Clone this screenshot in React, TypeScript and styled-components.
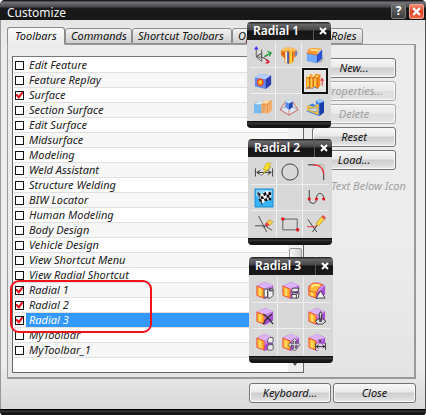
import React from 'react';
import styled, { createGlobalStyle } from 'styled-components';

const Global = createGlobalStyle`
  * { box-sizing: border-box; }
  body { margin: 0; background: #fff; font-family: "Noto Sans", "Open Sans", sans-serif; font-size: 11px; color: #111; }
  button, input { font: inherit; color: inherit; margin: 0; padding: 0; }
`;

const Dialog = styled.main`
  position: relative;
  display: flex;
  flex-direction: column;
  min-height: 100vh;
  overflow: hidden;
  border-radius: 5px;
  background: #1a1a1a;
`;
const TitleBar = styled.header`
  display: flex;
  align-items: center;
  gap: 3px;
  height: 20px;
  padding: 2px 2px 0 7px;
  color: #f4f4f4;
  background: linear-gradient(#1c1c1c 0 1px, #77777b 2px, #48484b 7px, #1b1b1b 8px, #171717 100%);
`;
const Title = styled.h1`
  flex: 1;
  margin: 0;
  padding-top: 2px;
  font-size: 12px;
  line-height: 15px;
  font-weight: 400;
`;
const TitleButton = styled.button<{ $danger?: boolean }>`
  display: grid;
  place-items: center;
  width: 15px;
  height: 15px;
  border: 1px solid ${p => (p.$danger ? '#f2a492' : '#7b7b7b')};
  border-radius: 2px;
  background: ${p => (p.$danger ? 'linear-gradient(#f08a72, #df3c1c 55%, #ee6a49)' : 'linear-gradient(#6a6a6a, #3c3c3c)')};
  color: #fff;
  font-size: 12px;
  line-height: 12px;
  font-weight: 700;
`;
const Content = styled.div`
  flex: 1;
  display: flex;
  flex-direction: column;
  padding: 7px 9px 6px 6px;
  border-left: 1px solid #999;
  border-right: 1px solid #555;
  background: linear-gradient(#e6e6e6, #ececec 30px, #ececec 345px, #d9d9d9);
`;
const TabList = styled.div`
  display: flex;
  align-items: flex-end;
  height: 17px;
`;
const Tab = styled.button<{ $width: number; $active?: boolean }>`
  flex: 0 0 ${p => p.$width}px;
  height: ${p => (p.$active ? 18 : 16)}px;
  margin-bottom: ${p => (p.$active ? -1 : 0)}px;
  padding-left: 5px;
  z-index: ${p => (p.$active ? 1 : 0)};
  border: 1px solid #8c8c8c;
  border-bottom-color: ${p => (p.$active ? '#ececec' : '#8c8c8c')};
  border-radius: 3px 3px 0 0;
  background: ${p => (p.$active ? 'linear-gradient(#fafafa, #ececec)' : 'linear-gradient(#f3f3f3, #e0e0e0 50%, #cfcfcf)')};
  font-style: italic;
  line-height: 14px;
  text-align: left;
  white-space: nowrap;
  &:first-child { padding-left: 7px; }
`;
const TabPanel = styled.section`
  flex: 1;
  display: flex;
  align-items: stretch;
  gap: 8px;
  padding: 11px 18px 4px 4px;
  border: 1px solid #9a9a9a;
  border-width: 1px 2px 2px 1px;
  background: linear-gradient(#ececec 60%, #e4e4e4);
`;
const ListBox = styled.div`
  flex: 1;
  display: flex;
  min-width: 0;
  border: 1px solid #666;
  border-top-color: #777;
  background: #fff;
`;
const Items = styled.ul`
  flex: 1;
  margin: 0;
  padding: 1px 0 14px 1px;
  list-style: none;
`;
const Item = styled.li`
  height: 15px;
  border-bottom: 1px solid #e0e0e0;
  &:nth-child(even) { background: #f7f7f7; }
`;
const ItemLabel = styled.label`
  display: flex;
  align-items: center;
  gap: 2px;
  height: 14px;
  padding-left: 1px;
`;
const Check = styled.input`
  appearance: none;
  position: relative;
  flex: 0 0 9px;
  height: 9px;
  border: 1px solid #111;
  background: #fff;
  &:checked::after {
    content: '';
    position: absolute;
    inset: 0;
    background: #e2141c;
    clip-path: polygon(0 35%, 18% 35%, 38% 58%, 85% 0, 100% 0, 100% 25%, 48% 100%, 32% 100%, 0 60%);
  }
`;
const ItemText = styled.span<{ $selected?: boolean }>`
  flex: 1;
  padding-left: 3px;
  font-style: italic;
  line-height: 14px;
  color: ${p => (p.$selected ? '#fff' : '#222')};
  background: ${p => (p.$selected ? '#3399ff' : 'transparent')};
`;
const ScrollTrack = styled.div`
  display: flex;
  flex-direction: column;
  flex: 0 0 15px;
  background: #f0f0f0;
`;
const ScrollButton = styled.button`
  display: grid;
  place-items: center;
  height: 16px;
  border: 0;
  background: #eee;
`;
const ScrollThumb = styled.div`
  height: 90px;
  margin: 175px 1px auto;
  border: 1px solid #999;
  border-radius: 2px;
  background: linear-gradient(90deg, #f7f7f7, #cfcfd2);
`;
const Actions = styled.div`
  display: flex;
  flex-direction: column;
  gap: 3px;
  flex: 0 0 84px;
  min-width: 0;
  padding-top: 2px;
`;
const PushButton = styled.button`
  height: 20px;
  border: 1px solid #747474;
  border-radius: 3px;
  box-shadow: inset 0 0 0 1px #f8f8f8;
  background: linear-gradient(#f8f8f8, #e9e9e9 45%, #cdcdcd 50%, #dedede 85%, #f2f2f2);
  font-style: italic;
  line-height: 16px;
  &:disabled { color: #a0a0a0; border-color: #aaa; background: linear-gradient(#f2f2f2, #e8e8e8 48%, #dcdcdc 52%, #e6e6e6); }
`;
const TextOption = styled.label`
  display: flex;
  align-items: center;
  gap: 10px;
  height: 20px;
  margin-top: 2px;
  color: #a0a0a0;
  font-style: italic;
  white-space: nowrap;
`;
const Footer = styled.footer`
  display: grid;
  grid-template-columns: 82px 83px;
  justify-content: end;
  gap: 2px;
  padding-top: 4px;
`;
const BottomFrame = styled.div`
  height: 7px;
  background: linear-gradient(#000 0 1px, #4a4a4a 2px, #1c1c1c 3px, #111);
`;
const Highlight = styled.div`
  position: absolute;
  left: 10px;
  top: 280px;
  width: 142px;
  height: 53px;
  border: 2px solid #f2121b;
  border-radius: 9px;
  pointer-events: none;
  z-index: 2;
`;
const Palette = styled.section<{ $left: number; $top: number }>`
  position: absolute;
  left: ${p => p.$left}px;
  top: ${p => p.$top}px;
  z-index: 3;
  width: 84px;
  overflow: hidden;
  border-radius: 4px;
  background: #d8d8d8;
`;
const PaletteHeader = styled.header`
  display: flex;
  height: 18px;
  color: #fff;
  background: linear-gradient(#2a2a2a 0 1px, #69696c 2px, #454548 8px, #151515 9px, #1a1a1a);
`;
const PaletteTitle = styled.h2`
  flex: 1;
  margin: 0;
  padding-left: 6px;
  font-size: 12px;
  line-height: 18px;
  font-weight: 600;
  white-space: nowrap;
`;
const PaletteClose = styled.button`
  display: grid;
  place-items: center;
  width: 18px;
  border: 0;
  border-left: 1px solid #555;
  background: none;
`;
const PaletteGrid = styled.div`
  display: grid;
  grid-template-columns: repeat(3, 26px);
  grid-auto-rows: 26px;
  justify-content: center;
  padding: 2px 0 1px;
`;
const PaletteBase = styled.div`
  height: 7px;
  background: linear-gradient(#111 0 1px, #3c3c3c 2px, #1a1a1a 4px, #111);
`;
const Tool = styled.button<{ $active?: boolean }>`
  display: grid;
  place-items: center;
  border: 0 solid #efefef;
  border-right-width: 1px;
  border-bottom-width: 1px;
  background: #d8d8d8;
  &:nth-child(3n) { border-right-width: 0; }
  &:nth-child(n + 7) { border-bottom-width: 0; }
  ${p => p.$active && '&&& { border: 2px solid #111; background: #e4e4e4; }'}
`;
const Glyph = styled.svg`
  display: block;
  overflow: visible;
`;

const Icon = ({ children }: { children: React.ReactNode }) => (
  <Glyph width="18" height="18" viewBox="0 0 20 20" fill="none" aria-hidden="true">{children}</Glyph>
);
const Cross = ({ size }: { size: number }) => (
  <Glyph width={size} height={size} viewBox="0 0 8 8" aria-hidden="true"><path d="M1 1l6 6M7 1L1 7" stroke="#fff" strokeWidth="2" /></Glyph>
);

const AxesIcon = () => (
  <Icon>
    <path d="M2.500 3v9l6 5V8l-6 4M8.500 4v9M8.500 8l-5 3M2.500 12l8 1 5-3M10 13l6 3" stroke="#555" />
    <path d="M0 4l2.500-4L5 4z" fill="#33f" />
    <path d="M12 11l6-3M15 6l4 1.500-2 4" stroke="#159c31" strokeWidth="1.300" />
    <path d="M13 15l4 3M13 19l4-1" stroke="#d91822" strokeWidth="1.600" />
  </Icon>
);
const SectionIcon = () => (
  <Icon>
    <path d="M1 5l5-3h8l5 3v5l-4 4v4l-5 2-5-2v-4l-4-4z" fill="#ee8a20" />
    <path d="M2 6l4 1v7l-4-4z" fill="#e0671c" />
    <path d="M6 6l2 1v12l-2-1z" fill="#fff2d5" />
    <path d="M8 6l2 1v13l-2-1z" fill="#2b61df" />
    <path d="M10 6l4-1v13l-4 2z" fill="#ffd23a" />
    <path d="M14 5l5 1v4l-5 4z" fill="#f18727" />
    <path d="M17 5l2 1v4l-2 2z" fill="#5284df" />
    <path d="M1 5l5-3h8l5 3-5 1-4-1-4 1z" fill="#ffc35b" />
    <path d="M10 6v13M14 6v11" stroke="#c64a12" strokeWidth=".800" />
  </Icon>
);
const BlendIcon = () => (
  <Icon>
    <path d="M7 19l10-1 3-4-6-1z" fill="#aaa" />
    <path d="M1 8l11 2v9L1 17z" fill="#6da9ff" />
    <path d="M12 10l6-6v10l-6 5z" fill="#2953d0" />
    <path d="M1 8q1-5 5-6l12 1q-5 2-6 7z" fill="#f99a35" />
    <path d="M5 4l9 1" stroke="#ffe38b" strokeWidth="2" />
    <path d="M1 8l11 2" stroke="#d96c27" />
  </Icon>
);
const HoleIcon = () => (
  <Icon>
    <path d="M1 6l6-4 12 2v10l-6 5-12-3z" fill="#6687ee" />
    <path d="M1 6l6-4 12 2-6 4z" fill="#b4ceff" />
    <path d="M13 8l6-4v10l-6 5z" fill="#2c3fae" />
    <ellipse cx="7" cy="11.500" rx="3" ry="3.500" fill="#ffc02b" stroke="#ee431c" strokeWidth="1.500" />
  </Icon>
);
const ShellIcon = () => (
  <Icon>
    <path d="M0 6l5-4 3 2 3-2 5 1v12l-3 4-4-3-4 3H0z" fill="#f3921c" />
    <path d="M2 7v10M6 6v11M10 7v9" stroke="#ffce52" strokeWidth="2" />
    <path d="M1 6l4-3M6 6l4-3M10 7l4-3" stroke="#ffe790" strokeWidth="1.500" />
    <path d="M4 6v12M8 6v11M13 7v11M0 6l4 1 4-1 5 1 3-4" stroke="#d8660d" />
    <path d="M0 19q3-4 6 0M7 19q3-4 6 0" stroke="#5276b0" />
    <path d="M18 15V7M16.500 10L18 7l1.500 3" stroke="#df202a" />
  </Icon>
);
const MergeIcon = () => (
  <Icon>
    <path d="M0 7l4-3h8v10l-3 3H0z" fill="#78baf0" />
    <path d="M1 7l4-3h7l-3 3z" fill="#d6f2ff" />
    <path d="M8 7l3-4h9v11l-4 3H8z" fill="#f6ad66" fillOpacity=".9" />
    <path d="M8 7h7l5-4M15 7v10M11 4v10l-3 3" stroke="#e48a3c" strokeWidth=".8" />
    <path d="M9 6l3-3h6l-4 3z" fill="#ffe0a7" />
  </Icon>
);
const DraftIcon = () => (
  <Icon>
    <path d="M0 13l10-5 10 5-10 6z" fill="#dce5f2" stroke="#7e99c9" strokeWidth=".700" />
    <path d="M6 4L0 13l10 6 10-6-6-9" stroke="#e0664d" />
    <path d="M6 4l4-3 4 3v6l-4 3-4-3z" fill="#5b88ec" />
    <path d="M10 6l4-2v6l-4 3z" fill="#2448ac" />
    <path d="M6 4l4-3 4 3-4 2z" fill="#d0e4ff" />
    <path d="M10 13v6" stroke="#e0664d" strokeWidth=".800" />
  </Icon>
);
const BodyIcon = () => (
  <Icon>
    <path d="M1 9l6-3 4 2V3l5-2 4 3v12l-6 4-13-5z" fill="#3d83e8" />
    <path d="M11 3l5-2 4 3-5 2z" fill="#98c7ff" />
    <path d="M15 6l5-2v12l-5 4z" fill="#183fa8" />
    <path d="M1 9l2-1 6 2 3-3h2v12l-5-2-8-3z" fill="#f5bf3e" />
    <path d="M3 11l6 1 3-2v5l-7-1z" fill="#dce9e5" stroke="#658eb0" strokeWidth=".700" />
  </Icon>
);
const DimensionIcon = () => (
  <Icon>
    <path d="M.500 6v9M19.500 6v9M2 10.500h16M6 8l-4 2.500L6 13M14 8l4 2.500-4 2.500" stroke="#333" />
    <path d="M7 14L17 5" stroke="#666" />
    <path d="M13 0h5l-3 4h3l-9 8 3-5H9z" fill="#ffe129" stroke="#b99800" strokeWidth=".600" />
  </Icon>
);
const CircleIcon = () => <Icon><circle cx="10" cy="10" r="9" stroke="#333" /></Icon>;
const FilletIcon = () => (
  <Icon>
    <path d="M1 2h17M18.500 2v16" stroke="#aaa" />
    <path d="M1 2h8M18.500 11v8" stroke="#333" />
    <path d="M7 2q11 0 11.500 10" stroke="#f02b38" strokeWidth="1.500" />
  </Icon>
);
const FlagIcon = () => (
  <Icon>
    <rect x="0" y="0" width="20" height="20" fill="#39b3fa" stroke="#168ace" />
    <path d="M1 1h18v7H1z" fill="#8ed8ff" />
    <path d="M3 4q4 3 7 0t7 0l1 9q-4-2-7 1t-6 0z" fill="#fff" />
    <path d="M3 4l3 1v3l-3-1zM9 5l3-2 1 3-3 2zM15 3l3 1v3l-3-1zM6 8l3 0 1 3-3 0zM13 6l3 0v3l-3 1zM4 11l3 0 1 4-3-1zM10 11l3-1 1 3-3 1zM15 9l3 1v3l-3-1z" fill="#111" />
    <path d="M3 3l5 15" stroke="#333" />
  </Icon>
);
const SplineIcon = () => (
  <Icon>
    <path d="M2.500 1v11q0 4 4 4t4-5q0-6 4-6t4 6" stroke="#333" />
    <circle cx="2.500" cy="11" r="1.700" fill="#e4151e" /><circle cx="10.500" cy="11" r="1.700" fill="#e4151e" /><circle cx="18.500" cy="11" r="1.700" fill="#e4151e" />
  </Icon>
);
const TrimIcon = () => (
  <Icon>
    <path d="M4 1l9 18M0 12h11l8 5M9 14l5-5" stroke="#444" />
    <path d="M13 8l3-3 4 3-4 4z" fill="#ffd04a" stroke="#a97c20" strokeWidth=".700" />
    <path d="M13 8l3 3-2 2q-3-1-3-3z" fill="#ee4252" />
  </Icon>
);
const RectangleIcon = () => (
  <Icon>
    <path d="M2 4.500h16v12H2z" stroke="#555" />
    <circle cx="2" cy="4.500" r="2" fill="#e51c23" /><circle cx="18.500" cy="16.500" r="2" fill="#e51c23" />
  </Icon>
);
const ExtendIcon = () => (
  <Icon>
    <path d="M1 5l10 14M14 8L6 19" stroke="#333" />
    <path d="M0 13h10" stroke="#e32e35" />
    <path d="M10 12l1-4 6-7 3 3-6 7z" fill="#ffd742" stroke="#a97c20" strokeWidth=".700" />
    <path d="M16 2l2-2 3 3-2 2z" fill="#e64a4a" />
  </Icon>
);

const CubeIcon = ({ curved, children }: { curved?: boolean; children: React.ReactNode }) => (
  <Icon>
    <path d="M1 5l9-4 9 4v10l-9 5-9-4z" fill="#a84ed0" />
    <path d="M1 5l9-4 9 4-10 4z" fill="#ddb4f4" />
    <path d="M9 9l10-4-4 5-6 4z" fill="#c986e8" />
    <path d="M1 5.500L9 9v10l-8-3z" fill="#ffae2c" stroke="#f0503a" />
    <path d="M3 8l3 1v8l-3-1z" fill="#ffd85e" />
    {curved && <path d="M1 11q0-8 6-9l10 2q-6 2-7 9z" fill="#ffb63b" stroke="#e9552f" />}
    {curved && <path d="M4 7q2-3 5-3l4 1" stroke="#fff08a" strokeWidth="2" />}
    {children}
  </Icon>
);
const CopyFaceIcon = () => <CubeIcon><path d="M9 9h4v9H9zM13 10l2-2 4 1v7l-3 3h-3zM15 8v3h4" fill="#eee" stroke="#444" /></CubeIcon>;
const ReplaceFaceIcon = () => <CubeIcon><path d="M12 8h7l-2 4h-7zM11 15l2-2h6l-1 6h-7zM11 15h5l2-2M16 15v4" fill="#eee" stroke="#444" /></CubeIcon>;
const AngleFaceIcon = () => <CubeIcon curved><path d="M14 11l5 8H9z" fill="#eee" stroke="#333" /></CubeIcon>;
const DeleteFaceIcon = () => <CubeIcon><path d="M8 8q4 2 11 11M18 8q-6 3-10 11" stroke="#333" strokeWidth="1.500" /></CubeIcon>;
const OffsetFaceIcon = () => <CubeIcon><path d="M8 16l4-3h4l4 3-4 3h-5zM14 5l-2 4h1v7h2V9h1z" fill="#ddd" stroke="#333" /></CubeIcon>;
const PatternFaceIcon = () => <CubeIcon><path d="M13 7l2-2h4v5l-1 1h-5zM13 15l2-2h4v5l-1 1h-5z" fill="#eee" stroke="#555" /></CubeIcon>;
const MoveFaceIcon = () => <CubeIcon><path d="M14 6l3 3h-2v3h2v-2l3 3-3 3v-2h-2v3h2l-3 3-3-3h2v-3h-3v2l-3-3 3-3v2h3V9h-2z" fill="#ddd" stroke="#444" strokeWidth=".8" /></CubeIcon>;
const DimensionFaceIcon = () => (
  <CubeIcon>
    <path d="M8 12h12v7H8z" fill="#eee" fillOpacity=".8" />
    <path d="M8.500 11v8M19.500 11v8M9 15h10M12 13l-3 2 3 2M16 13l3 2-3 2M12 7l3 4M15 7l-3 4" stroke="#333" />
  </CubeIcon>
);

type ToolDef = { name: string; icon?: React.ReactNode; active?: boolean };
const palettes: { title: string; left: number; top: number; tools: ToolDef[] }[] = [
  {
    title: 'Radial 1', left: 247, top: 22,
    tools: [
      { name: 'Datum', icon: <AxesIcon /> }, { name: 'Section', icon: <SectionIcon /> }, { name: 'Blend', icon: <BlendIcon /> },
      { name: 'Hole', icon: <HoleIcon /> }, { name: 'Empty' }, { name: 'Extrude', icon: <ShellIcon />, active: true },
      { name: 'Unite', icon: <MergeIcon /> }, { name: 'Draft', icon: <DraftIcon /> }, { name: 'Body', icon: <BodyIcon /> },
    ],
  },
  {
    title: 'Radial 2', left: 248, top: 139,
    tools: [
      { name: 'Dimension', icon: <DimensionIcon /> }, { name: 'Circle', icon: <CircleIcon /> }, { name: 'Fillet', icon: <FilletIcon /> },
      { name: 'Finish', icon: <FlagIcon /> }, { name: 'Empty' }, { name: 'Spline', icon: <SplineIcon /> },
      { name: 'Trim', icon: <TrimIcon /> }, { name: 'Rectangle', icon: <RectangleIcon /> }, { name: 'Extend', icon: <ExtendIcon /> },
    ],
  },
  {
    title: 'Radial 3', left: 249, top: 257,
    tools: [
      { name: 'Copy face', icon: <CopyFaceIcon /> }, { name: 'Replace face', icon: <ReplaceFaceIcon /> }, { name: 'Angle', icon: <AngleFaceIcon /> },
      { name: 'Delete face', icon: <DeleteFaceIcon /> }, { name: 'Empty' }, { name: 'Offset', icon: <OffsetFaceIcon /> },
      { name: 'Pattern', icon: <PatternFaceIcon /> }, { name: 'Move', icon: <MoveFaceIcon /> }, { name: 'Linear dimension', icon: <DimensionFaceIcon /> },
    ],
  },
];

const tabs = [
  { name: 'Toolbars', width: 58 }, { name: 'Commands', width: 67 }, { name: 'Shortcut Toolbars', width: 100 },
  { name: 'Options', width: 93 }, { name: 'Roles', width: 38 },
];
const toolbars = [
  'Edit Feature', 'Feature Replay', 'Surface', 'Section Surface', 'Edit Surface', 'Midsurface', 'Modeling',
  'Weld Assistant', 'Structure Welding', 'BIW Locator', 'Human Modeling', 'Body Design', 'Vehicle Design',
  'View Shortcut Menu', 'View Radial Shortcut', 'Radial 1', 'Radial 2', 'Radial 3', 'MyToolbar', 'MyToolbar_1',
];
const enabled = ['Surface', 'Radial 1', 'Radial 2', 'Radial 3'];

const Arrow = ({ up }: { up?: boolean }) => (
  <Glyph width="7" height="5" viewBox="0 0 7 5" aria-hidden="true"><path d={up ? 'M0 4l3-4 3 4z' : 'M0 0h6L3 4z'} fill="#555" /></Glyph>
);

export default function App() {
  return (
    <>
      <Global />
      <Dialog>
        <TitleBar>
          <Title>Customize</Title>
          <TitleButton aria-label="Help">?</TitleButton>
          <TitleButton $danger aria-label="Close window"><Cross size={9} /></TitleButton>
        </TitleBar>
        <Content>
          <TabList role="tablist">
            {tabs.map((t, i) => (
              <Tab key={t.name} role="tab" aria-selected={i === 0} $active={i === 0} $width={t.width}>{t.name}</Tab>
            ))}
          </TabList>
          <TabPanel role="tabpanel">
            <ListBox>
              <Items>
                {toolbars.map(name => (
                  <Item key={name}>
                    <ItemLabel>
                      <Check type="checkbox" defaultChecked={enabled.includes(name)} />
                      <ItemText $selected={name === 'Radial 3'}>{name}</ItemText>
                    </ItemLabel>
                  </Item>
                ))}
              </Items>
              <ScrollTrack>
                <ScrollButton aria-label="Scroll up"><Arrow up /></ScrollButton>
                <ScrollThumb />
                <ScrollButton aria-label="Scroll down"><Arrow /></ScrollButton>
              </ScrollTrack>
            </ListBox>
            <Actions>
              <PushButton>New...</PushButton>
              <PushButton disabled>Properties...</PushButton>
              <PushButton disabled>Delete</PushButton>
              <PushButton>Reset</PushButton>
              <PushButton>Load...</PushButton>
              <TextOption><Check type="checkbox" disabled />Text Below Icon</TextOption>
            </Actions>
          </TabPanel>
          <Footer>
            <PushButton>Keyboard...</PushButton>
            <PushButton>Close</PushButton>
          </Footer>
        </Content>
        <BottomFrame />
        <Highlight />
        {palettes.map(p => (
          <Palette key={p.title} $left={p.left} $top={p.top}>
            <PaletteHeader>
              <PaletteTitle>{p.title}</PaletteTitle>
              <PaletteClose aria-label={`Close ${p.title}`}><Cross size={8} /></PaletteClose>
            </PaletteHeader>
            <PaletteGrid>
              {p.tools.map(t => <Tool key={t.name} aria-label={t.name} $active={t.active}>{t.icon}</Tool>)}
            </PaletteGrid>
            <PaletteBase />
          </Palette>
        ))}
      </Dialog>
    </>
  );
}
